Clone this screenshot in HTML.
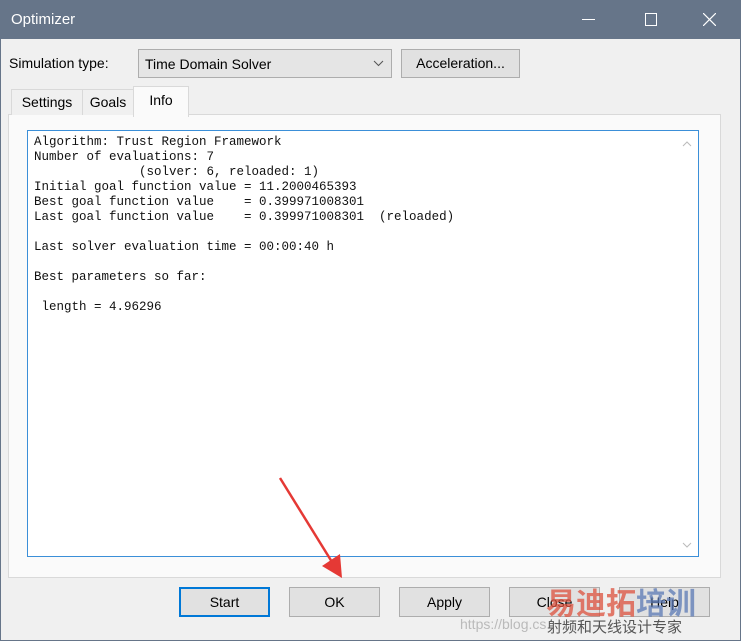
<!DOCTYPE html><html><head><style>
body{margin:0;width:741px;height:641px;overflow:hidden;background:#f0f0f0;font-family:"Liberation Sans",sans-serif;font-size:14px;color:#000;position:relative}
.a{position:absolute}
.title{left:0;top:0;width:741px;height:39px;background:#667589;color:#fff}
.btn{position:absolute;top:587px;height:28px;width:89px;border:1px solid #adadad;background:#e1e1e1;text-align:center;line-height:28px;font-size:14px}
pre{margin:0;font-family:"Liberation Mono",monospace;font-size:12.5px;line-height:15px;color:#111}
</style></head><body>
<div class="a title">
<div class="a" style="left:11px;top:11px;font-size:15px">Optimizer</div>
<div class="a" style="left:582px;top:19px;width:13px;height:1px;background:#fff"></div>
<div class="a" style="left:645px;top:13px;width:10px;height:11px;border:1px solid #fff"></div>
<svg class="a" style="left:703px;top:13px" width="13" height="13"><path d="M0 0L13 13M13 0L0 13" stroke="#fff" stroke-width="1.2"/></svg>
</div>
<div class="a" style="left:0;top:39px;width:741px;height:602px;border:1px solid #667589;box-sizing:border-box;border-top:none"></div>
<div class="a" style="left:9px;top:55px">Simulation type:</div>
<div class="a" style="left:138px;top:49px;width:252px;height:27px;border:1px solid #adadad;background:#e5e5e5"><span class="a" style="left:6px;top:6px">Time Domain Solver</span>
<svg class="a" style="left:234px;top:10px" width="11" height="7"><path d="M1 1L5.5 5.5L10 1" stroke="#555" fill="none"/></svg></div>
<div class="a" style="left:401px;top:49px;width:117px;height:27px;border:1px solid #adadad;background:#e1e1e1;text-align:center;line-height:27px">Acceleration...</div>
<div class="a" style="left:8px;top:114px;width:711px;height:462px;border:1px solid #d9d9d9;background:#fafafa"></div>
<div class="a" style="left:11px;top:89px;width:70px;height:25px;border:1px solid #d9d9d9;border-bottom:none;background:#f0f0f0;text-align:center;line-height:25px">Settings</div>
<div class="a" style="left:82px;top:89px;width:50px;height:25px;border:1px solid #d9d9d9;border-bottom:none;background:#f0f0f0;text-align:center;line-height:25px">Goals</div>
<div class="a" style="left:133px;top:86px;width:54px;height:30px;border:1px solid #d9d9d9;border-bottom:none;background:#fafafa;text-align:center;line-height:26px">Info</div>
<div class="a" style="left:27px;top:130px;width:670px;height:425px;border:1px solid #3b8fd8;background:#fff">
<pre class="a" style="left:6px;top:4px">Algorithm: Trust Region Framework
Number of evaluations: 7
              (solver: 6, reloaded: 1)
Initial goal function value = 11.2000465393
Best goal function value    = 0.399971008301
Last goal function value    = 0.399971008301  (reloaded)

Last solver evaluation time = 00:00:40 h

Best parameters so far:

 length = 4.96296</pre>
<svg class="a" style="left:654px;top:10px" width="10" height="6"><path d="M1 5L5 1L9 5" stroke="#bbb" fill="none"/></svg>
<svg class="a" style="left:654px;top:411px" width="10" height="6"><path d="M1 1L5 5L9 1" stroke="#bbb" fill="none"/></svg>
</div>
<div class="btn" style="left:179px;border:2px solid #0078d7;width:87px;height:26px;line-height:26px">Start</div>
<div class="btn" style="left:289px">OK</div>
<div class="btn" style="left:399px">Apply</div>
<div class="btn" style="left:509px">Close</div>
<div class="btn" style="left:619px">Help</div>
<svg class="a" style="left:270px;top:470px" width="90" height="115"><path d="M10 8L62 92" stroke="#e53935" stroke-width="2.5"/><path d="M52 96L72 108L70 84Z" fill="#e53935"/></svg>
<div class="a" style="left:546px;top:584px;font-family:'Noto Sans CJK SC',sans-serif;font-size:30px;font-weight:bold;color:rgba(220,80,60,.75);line-height:34px">易迪拓<span style="color:rgba(90,120,180,.75)">培训</span></div>
<div class="a" style="left:460px;top:616px;font-size:14px;color:rgba(150,150,150,.6)">https://blog.cs</div>
<div class="a" style="left:547px;top:618px;font-family:'Noto Sans CJK SC',sans-serif;font-size:15px;color:#555;line-height:17px">射频和天线设计专家</div>
</body></html>
